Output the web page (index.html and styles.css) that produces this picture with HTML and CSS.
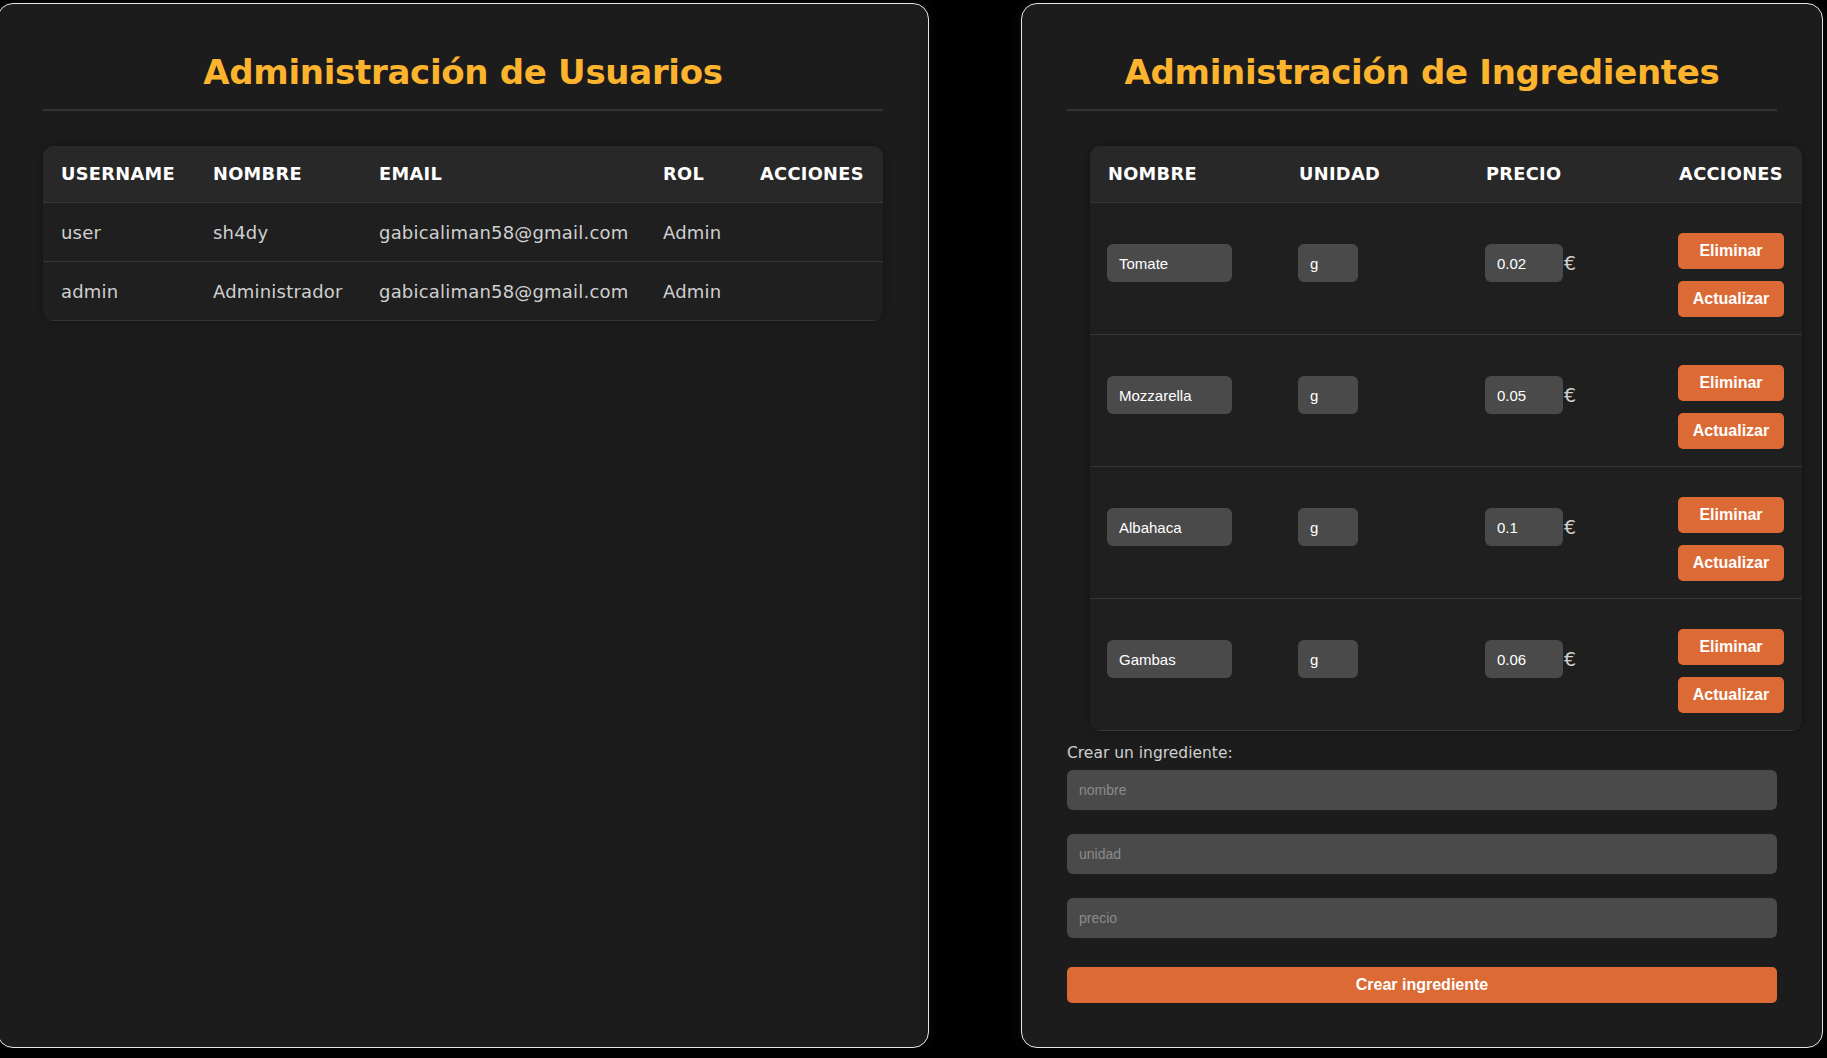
FILE: index.html
```html
<!DOCTYPE html>
<html lang="es">
<head>
<meta charset="utf-8">
<title>Administración</title>
<link rel="stylesheet" href="styles.css">
</head>
<body>
<div class="page">
  <section class="panel panel-users">
    <h2 class="panel-title">Administración de Usuarios</h2>
    <div class="table-wrap">
      <table class="data-table users-table">
        <colgroup>
          <col class="c-user"><col class="c-name"><col class="c-email"><col class="c-rol"><col class="c-act">
        </colgroup>
        <thead>
          <tr><th>USERNAME</th><th>NOMBRE</th><th>EMAIL</th><th>ROL</th><th>ACCIONES</th></tr>
        </thead>
        <tbody>
          <tr><td>user</td><td>sh4dy</td><td>gabicaliman58@gmail.com</td><td>Admin</td><td></td></tr>
          <tr><td>admin</td><td>Administrador</td><td>gabicaliman58@gmail.com</td><td>Admin</td><td></td></tr>
        </tbody>
      </table>
    </div>
  </section>

  <section class="panel panel-ingredients">
    <h2 class="panel-title">Administración de Ingredientes</h2>
    <div class="table-wrap ing-wrap">
      <table class="data-table ing-table">
        <colgroup>
          <col class="i-name"><col class="i-unit"><col class="i-price"><col class="i-act">
        </colgroup>
        <thead>
          <tr><th>NOMBRE</th><th>UNIDAD</th><th>PRECIO</th><th class="th-act">ACCIONES</th></tr>
        </thead>
        <tbody>
          <tr>
            <td class="cell-in"><input class="cell-input in-name" type="text" value="Tomate"></td>
            <td class="cell-in"><input class="cell-input in-unit" type="text" value="g"></td>
            <td class="cell-in"><input class="cell-input in-price" type="text" value="0.02"><span class="euro">€</span></td>
            <td class="cell-act"><div class="actions"><button class="btn">Eliminar</button><button class="btn">Actualizar</button></div></td>
          </tr>
          <tr>
            <td class="cell-in"><input class="cell-input in-name" type="text" value="Mozzarella"></td>
            <td class="cell-in"><input class="cell-input in-unit" type="text" value="g"></td>
            <td class="cell-in"><input class="cell-input in-price" type="text" value="0.05"><span class="euro">€</span></td>
            <td class="cell-act"><div class="actions"><button class="btn">Eliminar</button><button class="btn">Actualizar</button></div></td>
          </tr>
          <tr>
            <td class="cell-in"><input class="cell-input in-name" type="text" value="Albahaca"></td>
            <td class="cell-in"><input class="cell-input in-unit" type="text" value="g"></td>
            <td class="cell-in"><input class="cell-input in-price" type="text" value="0.1"><span class="euro">€</span></td>
            <td class="cell-act"><div class="actions"><button class="btn">Eliminar</button><button class="btn">Actualizar</button></div></td>
          </tr>
          <tr>
            <td class="cell-in"><input class="cell-input in-name" type="text" value="Gambas"></td>
            <td class="cell-in"><input class="cell-input in-unit" type="text" value="g"></td>
            <td class="cell-in"><input class="cell-input in-price" type="text" value="0.06"><span class="euro">€</span></td>
            <td class="cell-act"><div class="actions"><button class="btn">Eliminar</button><button class="btn">Actualizar</button></div></td>
          </tr>
        </tbody>
      </table>
    </div>
    <form class="create-form">
      <label class="create-label">Crear un ingrediente:</label>
      <input class="form-input" type="text" placeholder="nombre">
      <input class="form-input" type="text" placeholder="unidad">
      <input class="form-input" type="text" placeholder="precio">
      <button class="btn btn-wide" type="button">Crear ingrediente</button>
    </form>
  </section>
</div>
</body>
</html>
```

FILE: styles.css
```css
* { box-sizing: border-box; }

html, body {
  margin: 0;
  background: #000;
  font-family: "DejaVu Sans", "Liberation Sans", sans-serif;
  color: #cfcfcf;
}

.page {
  display: flex;
  align-items: stretch;
  gap: 92px;
  padding-top: 3px;
  height: 1048px;
  overflow: hidden;
}

.panel {
  background: #1c1c1c;
  border: 1px solid #e6e6e6;
  border-radius: 16px;
  box-shadow: 0 0 14px rgba(255, 255, 255, 0.06);
  padding: 0 45px 44px;
  flex: none;
}

.panel-users {
  width: 932px;
  margin-left: -3px;
}

.panel-ingredients {
  width: 802px;
}

.panel-title {
  margin: 0;
  padding-top: 46px;
  padding-bottom: 15px;
  border-bottom: 2px solid #333;
  font-size: 34px;
  line-height: 44px;
  font-weight: bold;
  color: #fcb42f;
  text-align: center;
  letter-spacing: -0.3px;
}

.table-wrap {
  margin-top: 35px;
  border-radius: 10px;
  overflow: hidden;
  background: #1f1f1f;
  box-shadow: 0 0 10px rgba(0, 0, 0, 0.35);
}

.ing-wrap {
  width: 712px;
  margin-left: 23px;
}

.data-table {
  width: 100%;
  border-collapse: collapse;
  table-layout: fixed;
}

.data-table th {
  background: #282828;
  color: #fff;
  text-align: left;
  font-size: 17.8px;
  font-weight: bold;
  letter-spacing: 0.3px;
  line-height: 20px;
  padding: 18px 18px 18px;
  border-bottom: 1px solid #353535;
  white-space: nowrap;
}

.users-table td {
  font-size: 18px;
  letter-spacing: 0.2px;
  line-height: 22px;
  padding: 19px 18px 17px;
  border-bottom: 1px solid #353535;
  color: #cfcfcf;
  white-space: nowrap;
}

.c-user { width: 152px; }
.c-name { width: 166px; }
.c-email { width: 284px; }
.c-rol { width: 97px; }
.c-act { width: 141px; }

.i-name { width: 191px; }
.i-unit { width: 187px; }
.i-price { width: 192px; }
.i-act { width: 142px; }

.th-act { text-align: center !important; }

.ing-table td {
  border-bottom: 1px solid #353535;
  vertical-align: top;
}

.cell-in {
  padding: 41px 0 0 17px;
  white-space: nowrap;
}

.cell-act {
  padding: 30px 0 17px;
}

.cell-input {
  height: 38px;
  background: #4a4a4a;
  border: none;
  border-radius: 6px;
  color: #fff;
  font-family: "Liberation Sans", Arial, sans-serif;
  font-size: 15px;
  padding: 0 12px;
  outline: none;
  vertical-align: middle;
}

.in-name { width: 125px; }
.in-unit { width: 60px; }
.in-price { width: 78px; }

.euro {
  display: inline-block;
  vertical-align: middle;
  margin-left: 1px;
  font-size: 19px;
  color: #cfcfcf;
}

.actions {
  display: flex;
  flex-direction: column;
  align-items: center;
  gap: 12px;
}

.btn {
  width: 106px;
  height: 36px;
  border: none;
  border-radius: 5px;
  background: #dc6a35;
  color: #fff;
  font-family: "Liberation Sans", Arial, sans-serif;
  font-size: 16px;
  font-weight: bold;
  padding: 0;
  cursor: pointer;
}

.create-form {
  display: flex;
  flex-direction: column;
}

.create-label {
  margin-top: 12px;
  font-size: 15.5px;
  line-height: 20px;
  color: #cfcfcf;
}

.form-input {
  margin-top: 7px;
  margin-bottom: 17px;
  height: 40px;
  width: 100%;
  background: #4a4a4a;
  border: none;
  border-radius: 6px;
  padding: 0 12px;
  color: #fff;
  font-family: "Liberation Sans", Arial, sans-serif;
  font-size: 14px;
  outline: none;
}

.form-input::placeholder {
  color: #8a8a8a;
}

.btn-wide {
  width: 100%;
  margin-top: 12px;
}
```
